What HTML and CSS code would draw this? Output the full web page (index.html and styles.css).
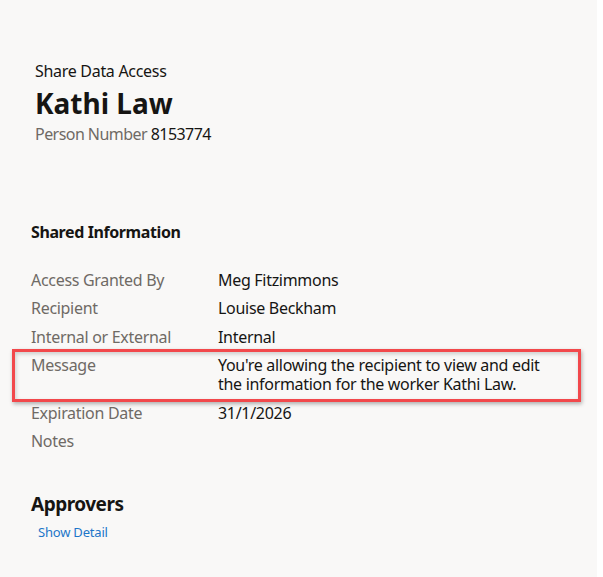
FILE: index.html
```html
<!DOCTYPE html>
<html lang="en">
<head>
<meta charset="utf-8">
<title>Share Data Access</title>
<link rel="stylesheet" href="styles.css">
</head>
<body>
<div class="page">
  <header class="header">
    <div class="subtitle">Share Data Access</div>
    <h1 class="title">Kathi Law</h1>
    <div class="person"><span class="person-label">Person Number</span> <span class="person-num">8153774</span></div>
  </header>
  <section class="section">
    <h2 class="section-title">Shared Information</h2>
    <div class="rows">
      <div class="row"><div class="label">Access Granted By</div><div class="value">Meg Fitzimmons</div></div>
      <div class="row"><div class="label">Recipient</div><div class="value">Louise Beckham</div></div>
      <div class="row"><div class="label">Internal or External</div><div class="value">Internal</div></div>
      <div class="row row-highlight"><div class="label">Message</div><div class="value msg">You're allowing the recipient to view and edit the information for the worker Kathi Law.</div></div>
      <div class="row"><div class="label">Expiration Date</div><div class="value">31/1/2026</div></div>
      <div class="row"><div class="label">Notes</div><div class="value"></div></div>
    </div>
  </section>
  <section class="approvers">
    <h2 class="approvers-title">Approvers</h2>
    <a class="link" href="#">Show Detail</a>
  </section>
</div>
</body>
</html>
```
FILE: styles.css
```css
html, body {
  margin: 0;
  padding: 0;
  background: #ffffff;
}
body {
  font-family: "Noto Sans", "Liberation Sans", sans-serif;
  color: #161513;
}
.page {
  width: 597px;
  min-height: 577px;
  background: #f9f8f7;
  box-sizing: border-box;
  padding-top: 61px;
}
.header {
  padding-left: 35px;
}
.subtitle {
  font-size: 16px;
  line-height: 20px;
  letter-spacing: -0.3px;
}
.title {
  margin: 0;
  font-size: 28px;
  font-weight: 700;
  line-height: 36px;
  padding-top: 4px;
}
.person {
  font-size: 16px;
  line-height: 20px;
  letter-spacing: -0.55px;
  padding-top: 3px;
}
.person-label {
  color: #6f6a65;
}
.section {
  padding: 77px 16px 0 31px;
}
.section-title {
  margin: 0 0 23px;
  font-size: 16px;
  font-weight: 700;
  line-height: 22px;
  letter-spacing: -0.4px;
}
.row {
  display: grid;
  grid-template-columns: 187px 1fr;
  font-size: 16px;
  line-height: 19px;
  letter-spacing: -0.3px;
  padding: 4.75px 0;
}
.label {
  color: #6f6a65;
}
.row-highlight {
  margin: -3px 0 -3px -19px;
  padding: 4.75px 0 4.75px 16px;
  border: 3px solid #f2484b;
  box-shadow: 1px 2px 4px rgba(0, 0, 0, 0.3), inset 1px 2px 4px rgba(0, 0, 0, 0.18);
}
.msg {
  max-width: 332px;
}
.approvers {
  padding: 36px 0 0 31px;
}
.approvers-title {
  margin: 0;
  font-size: 19px;
  font-weight: 700;
  line-height: 24px;
  letter-spacing: -0.5px;
}
.link {
  display: inline-block;
  margin: 7px 0 0 7px;
  font-size: 13px;
  line-height: 18px;
  letter-spacing: -0.2px;
  color: #1d76c9;
  text-decoration: none;
}
```
